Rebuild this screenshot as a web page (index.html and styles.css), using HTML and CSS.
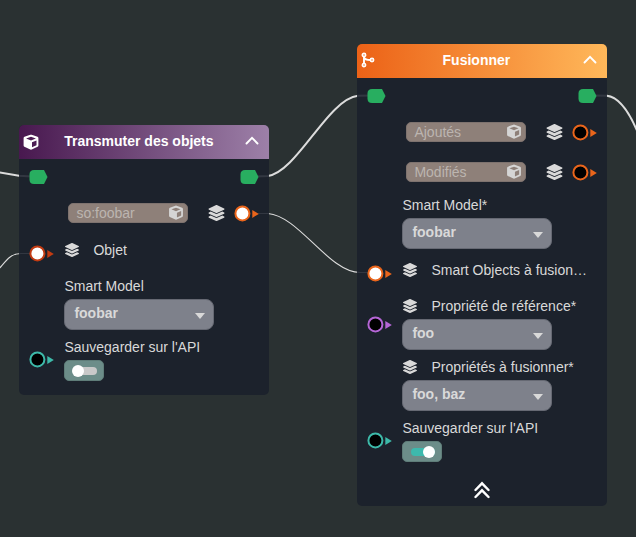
FILE: index.html
```html
<!DOCTYPE html>
<html lang="fr">
<head>
<meta charset="utf-8">
<title>Workflow</title>
<link rel="stylesheet" href="styles.css">
</head>
<body>
<svg class="defs" width="0" height="0" aria-hidden="true">
  <symbol id="layers" viewBox="0 0 512 512"><path d="M12.4 148l232.900 105.700c6.800 3.100 14.500 3.100 21.300 0L499.600 148c16.600-7.500 16.600-32.500 0-40L266.700 2.300a25.600 25.600 0 0 0-21.300 0L12.400 108c-16.600 7.500-16.600 32.500 0 40zm487.200 88.300l-58.100-26.300-161.600 73.300c-7.600 3.400-15.600 5.200-23.900 5.200s-16.300-1.700-23.900-5.200L70.500 210l-58.100 26.300c-16.600 7.500-16.600 32.500 0 40l232.900 105.600c6.800 3.100 14.500 3.100 21.300 0L499.600 276.300c16.600-7.500 16.600-32.500 0-40zm0 127.800l-57.900-26.200-161.900 73.400c-7.600 3.400-15.600 5.200-23.900 5.200s-16.300-1.700-23.900-5.200L70.300 337.900l-57.900 26.200c-16.600 7.500-16.600 32.500 0 40l232.900 105.600c6.800 3.100 14.500 3.100 21.300 0L499.600 404.100c16.600-7.500 16.600-32.500 0-40z"/></symbol>
  <symbol id="cube" viewBox="0 0 16 16"><path fill-rule="evenodd" d="M7.300.8 1.500 2.800Q.6 3.200.6 4.200v7.200q0 1 .8 1.400l5.900 2.700q.7.300 1.400 0l5.900-2.700q.8-.4.800-1.400V4.200q0-1-.9-1.400L8.700.8q-.7-.3-1.400 0ZM8 2.800 12.900 4.600 8 6.600 3.100 4.600ZM9 8.300l4.500-1.900v4.900L9 13.300Z"/></symbol>
  <symbol id="branch" viewBox="0 0 14 16"><path d="M3 4.200v7.600M3.200 5.500C3.600 7.300 5.500 8 9.200 8" fill="none" stroke="currentColor" stroke-width="1.900"/><g fill="none" stroke="currentColor" stroke-width="1.700"><circle cx="3" cy="2.900" r="1.600"/><circle cx="3" cy="13.100" r="1.600"/><circle cx="11" cy="8" r="1.600"/></g></symbol>
  <symbol id="chevron" viewBox="0 0 14 9"><path d="M1.500 7.500 7 1.900l5.500 5.600" fill="none" stroke="currentColor" stroke-width="1.900" stroke-linecap="round"/></symbol>
  <symbol id="double-chevron" viewBox="0 0 16 18"><path d="M1.500 9 8 2.300 14.500 9M1.500 16 8 9.300l6.500 6.700" fill="none" stroke="currentColor" stroke-width="2.400" stroke-linecap="round"/></symbol>
  <symbol id="flow" viewBox="0 0 18 14"><path d="M4.500 0h10L18 7l-3.500 7h-10Q0 14 0 9.500v-5Q0 0 4.500 0Z"/></symbol>
  <symbol id="port" viewBox="0 0 25 18"><circle class="dot" cx="8.400" cy="9.400" r="7" stroke="currentColor" stroke-width="2"/><path d="M18.300 5.900 24.800 9.900 18.300 13.900Z" fill="currentColor"/></symbol>
</svg>

<main class="canvas">
  <svg class="wires" viewBox="0 0 636 537">
    <g class="wire-flow">
      <path d="M-6 171.500 19 175.700 32 176.500"/>
      <path d="M255 176.500 268 175.900C297 172 328 99 358 95.800L372 95.500"/>
      <path d="M592 95.500 607 95.800C618 97 628 109 638 133"/>
    </g>
    <g class="wire-data">
      <path d="M-2 270C6 261 10 253.500 21 253.500H34"/>
      <path d="M257 213.500H268C299 216 329 272.500 360 272.500H372"/>
    </g>
  </svg>

  <section class="node node-transmute">
    <header class="node-head">
      <svg class="head-icon"><use href="#cube"/></svg>
      <h2>Transmuter des objets</h2>
      <svg class="collapse"><use href="#chevron"/></svg>
    </header>
    <div class="flow-row"><svg><use href="#flow"/></svg><svg><use href="#flow"/></svg></div>
    <div class="output-row">
      <div class="name-box"><span>so:foobar</span><svg><use href="#cube"/></svg></div>
      <svg class="layers"><use href="#layers"/></svg>
      <svg class="port linked orange"><use href="#port"/></svg>
    </div>
    <div class="input-row">
      <svg class="port linked red"><use href="#port"/></svg>
      <div class="label"><svg><use href="#layers"/></svg><span>Objet</span></div>
    </div>
    <div class="field-row">
      <div class="field"><div class="label">Smart Model</div><div class="select">foobar<i></i></div></div>
    </div>
    <div class="field-row toggle-row">
      <svg class="port teal"><use href="#port"/></svg>
      <div class="field"><div class="label">Sauvegarder sur l'API</div><div class="toggle"><i></i></div></div>
    </div>
  </section>

  <section class="node node-merge">
    <header class="node-head">
      <svg class="head-icon"><use href="#branch"/></svg>
      <h2>Fusionner</h2>
      <svg class="collapse"><use href="#chevron"/></svg>
    </header>
    <div class="flow-row"><svg><use href="#flow"/></svg><svg><use href="#flow"/></svg></div>
    <div class="output-row">
      <div class="name-box"><span>Ajoutés</span><svg><use href="#cube"/></svg></div>
      <svg class="layers"><use href="#layers"/></svg>
      <svg class="port orange"><use href="#port"/></svg>
    </div>
    <div class="output-row">
      <div class="name-box"><span>Modifiés</span><svg><use href="#cube"/></svg></div>
      <svg class="layers"><use href="#layers"/></svg>
      <svg class="port orange"><use href="#port"/></svg>
    </div>
    <div class="field-row">
      <div class="field"><div class="label">Smart Model*</div><div class="select">foobar<i></i></div></div>
    </div>
    <div class="input-row">
      <svg class="port linked orange"><use href="#port"/></svg>
      <div class="label"><svg><use href="#layers"/></svg><span>Smart Objects à fusion…</span></div>
    </div>
    <div class="field-row">
      <svg class="port purple"><use href="#port"/></svg>
      <div class="field"><div class="label"><svg><use href="#layers"/></svg><span>Propriété de référence*</span></div><div class="select">foo<i></i></div></div>
    </div>
    <div class="field-row">
      <div class="field"><div class="label"><svg><use href="#layers"/></svg><span>Propriétés à fusionner*</span></div><div class="select">foo, baz<i></i></div></div>
    </div>
    <div class="field-row toggle-row">
      <svg class="port teal"><use href="#port"/></svg>
      <div class="field"><div class="label">Sauvegarder sur l'API</div><div class="toggle on"><i></i></div></div>
    </div>
    <div class="more"><svg><use href="#double-chevron"/></svg></div>
  </section>
</main>
</body>
</html>
```
FILE: styles.css
```css
* { box-sizing: border-box; }
body { margin: 0; background: #2a3132; font: 14px/18px "Liberation Sans", Arial, sans-serif; color: #d9d9d9; }
svg { display: block; flex: none; fill: currentColor; }
.defs { position: absolute; }
.canvas { position: relative; width: 636px; height: 537px; overflow: hidden; }
.wires { position: absolute; inset: 0; width: 636px; height: 537px; fill: none; stroke: #dcdcdc; }
.wires path { fill: none; }
.wire-flow { stroke-width: 2; }
.wire-data { stroke-width: 1.1; }

.node { position: absolute; width: 250px; border-radius: 5px; background: rgba(26, 32, 43, .88); overflow: hidden; }
.node-transmute { left: 19.400px; top: 125px; height: 270px; }
.node-merge { left: 357.400px; top: 44px; height: 462px; }
.node-head { display: grid; grid-template-columns: 16px 1fr 14px; align-items: center; height: 34px; padding: 0 10px 0 4px; color: #fff; }
.node-transmute .node-head { background: linear-gradient(90deg, #48184f, #9d80a8); }
.node-merge .node-head { background: linear-gradient(90deg, #ec6217, #ffb85a); }
.node-head h2 { margin: 0; padding: 0 7px 2px 0; font-size: 14px; line-height: 18px; text-align: center; }
.node-merge h2 { padding-right: 8px; }
.head-icon { width: 16px; height: 16px; margin-top: -1px; }
.node-merge .head-icon { width: 14px; height: 16px; margin-top: -2px; }
.collapse { width: 14px; height: 9px; margin-top: -4px; }

.flow-row { display: flex; justify-content: space-between; align-items: center; height: 34px; padding: 2px 10px 0 10px; color: #28ae60; }
.flow-row svg { width: 19px; height: 14px; }
.output-row { display: flex; align-items: center; height: 40px; padding-left: 49px; }
.name-box { display: flex; align-items: center; justify-content: space-between; width: 120px; height: 20px; padding: 0 3px 0 7px; border: 1px solid #7e736f; border-radius: 5px; background: #8e8079; color: #bcb5b0; }
.name-box svg { width: 16px; height: 15px; color: #d5d5d5; margin-top: -1px; }
.layers { width: 17px; height: 16px; margin: 0 9px 0 20px; }
.port { width: 25px; height: 18px; fill: #000; }
.linked { fill: #fff; }
.orange { color: #ea651b; }
.red { color: #c23b12; }
.teal { color: #3db9a9; }
.purple { color: #b566d6; }

.input-row, .field-row { display: grid; grid-template-columns: 35px 1fr; align-items: center; padding-left: 10px; }
.input-row { height: 40px; }
.field-row { height: 61px; }
.field-row .field, .input-row .label { grid-column: 2; }
.field-row .port { grid-column: 1; grid-row: 1; }
.field { grid-row: 1; align-self: start; padding-top: 4px; }
.label { display: flex; align-items: center; height: 18px; white-space: nowrap; }
.label svg { width: 16px; height: 14px; margin-right: 13px; }
.input-row .label { margin-top: -6px; }
.select { display: flex; align-items: center; justify-content: space-between; width: 150px; height: 31px; margin-top: 4px; padding: 0 8px 3px 9px; border: 1px solid #666973; border-radius: 8px; background: #7e818b; font-weight: bold; }
.select i { border: 5.5px solid transparent; border-top: 6px solid #d9d9d9; border-bottom: 0; margin-top: 5px; }
.toggle-row { height: 50px; }
.toggle { display: flex; align-items: center; width: 40px; height: 21px; margin-top: 4px; padding-left: 8px; border: 1px solid #5f7d79; border-radius: 5px; background: #6c8d89; }
.toggle i { display: flex; align-items: center; width: 24px; height: 8px; border-radius: 4px; background: #c9c9c9; }
.toggle i::before { content: ""; width: 12px; height: 12px; margin-left: -1px; flex: none; border-radius: 50%; background: #fff; }
.toggle.on i { background: #3db9ad; }
.toggle.on i::before { margin-left: 12px; }
.more { display: flex; justify-content: center; padding-top: 16px; color: #fff; }
.more svg { width: 16px; height: 18px; }
```
